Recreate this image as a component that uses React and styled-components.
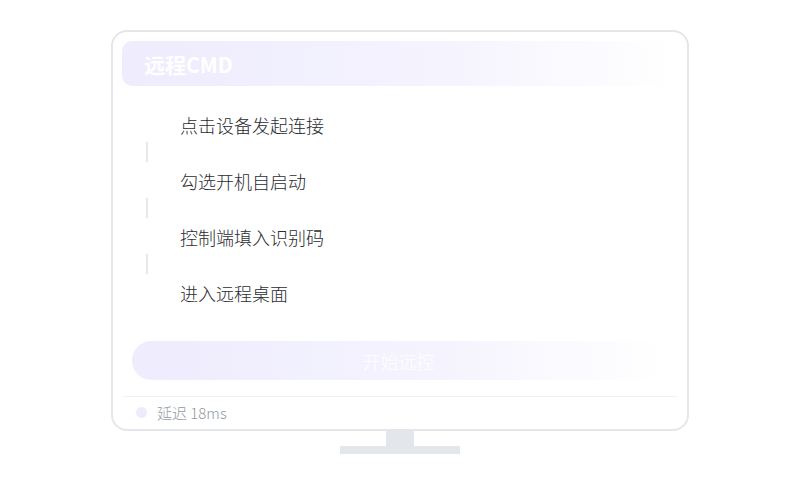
import styled, { createGlobalStyle } from "styled-components";

const GlobalStyle = createGlobalStyle`
  html, body {
    margin: 0;
    padding: 0;
    background: #ffffff;
    font-family: "Noto Sans CJK SC", "Noto Sans", sans-serif;
  }
`;

const steps = ["点击设备发起连接", "勾选开机自启动", "控制端填入识别码", "进入远程桌面"];

const App = () => {
  return (
    <Page>
      <GlobalStyle />
      <Monitor>
        <Screen>
          <Header>远程CMD</Header>
          <Steps>
            {steps.map((label, i) => (
              <div key={label}>
                {i > 0 && <Connector />}
                <Step>{label}</Step>
              </div>
            ))}
          </Steps>
          <StartButton>开始远控</StartButton>
          <Divider />
          <Footer>
            <Dot />
            <span>延迟 18ms</span>
          </Footer>
        </Screen>
        <Neck />
        <Base />
      </Monitor>
    </Page>
  );
};

const Page = styled.div`
  width: 800px;
  height: 500px;
  display: flex;
  justify-content: center;
  padding-top: 30px;
  box-sizing: border-box;
`;

const Monitor = styled.div`
  display: flex;
  flex-direction: column;
  align-items: center;
`;

const Screen = styled.div`
  width: 578px;
  height: 401px;
  box-sizing: border-box;
  border: 2px solid #e4e6ea;
  border-radius: 16px;
  padding: 9px 10px 0 9px;
  display: flex;
  flex-direction: column;
  background: #ffffff;
`;

const Header = styled.div`
  height: 45px;
  border-radius: 10px;
  padding-left: 22px;
  display: flex;
  align-items: center;
  font-size: 21px;
  font-weight: 700;
  color: #ffffff;
  background: linear-gradient(90deg, #eeecfd 0%, #f4f3fe 55%, rgba(255, 255, 255, 0) 100%);
`;

const Steps = styled.div`
  margin-top: 27px;
  display: flex;
  flex-direction: column;
`;

const Step = styled.div`
  padding-left: 58px;
  font-size: 18px;
  font-weight: 300;
  line-height: 24px;
  height: 24px;
  color: #2b2c30;
`;

const Connector = styled.div`
  width: 2px;
  height: 20px;
  margin: 5px 0 7px 24px;
  background: #e6e8ec;
`;

const StartButton = styled.div`
  margin: 36px 12px 0 10px;
  height: 39px;
  border-radius: 20px;
  display: flex;
  align-items: center;
  justify-content: center;
  font-size: 18px;
  font-weight: 300;
  color: #ffffff;
  background: linear-gradient(90deg, #eeecfd 0%, #f4f3fe 55%, rgba(255, 255, 255, 0) 100%);
`;

const Divider = styled.div`
  margin: 16px 0 0 1px;
  height: 1px;
  background: #eef0f3;
`;

const Footer = styled.div`
  flex: 1;
  display: flex;
  align-items: center;
  gap: 10px;
  padding-left: 14px;
  padding-bottom: 2px;
  font-size: 15px;
  font-weight: 300;
  color: #9297a3;
`;

const Dot = styled.div`
  width: 11px;
  height: 11px;
  border-radius: 50%;
  background: #eeebfd;
`;

const Neck = styled.div`
  width: 28px;
  height: 15px;
  background: #e3e6ea;
`;

const Base = styled.div`
  width: 120px;
  height: 8px;
  background: #e3e6ea;
`;

export default App;
